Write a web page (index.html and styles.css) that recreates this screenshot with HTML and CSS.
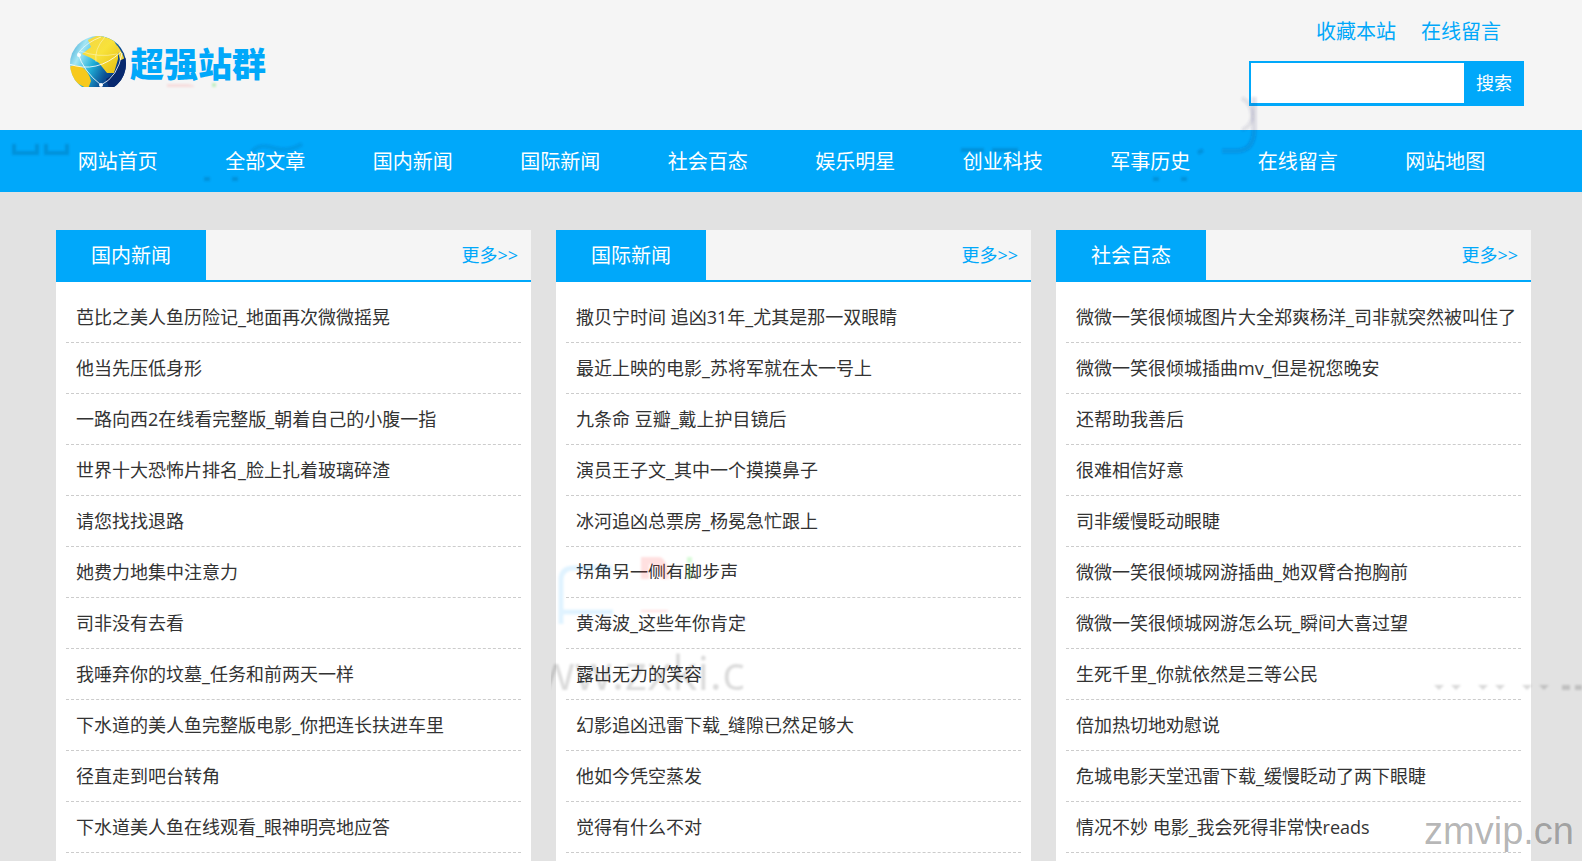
FILE: index.html
```
<!DOCTYPE html>
<html lang="zh-CN">
<head>
<meta charset="utf-8">
<title>超强站群</title>
<link rel="stylesheet" href="styles.css">
</head>
<body>
<header class="header">
  <div class="wrap header-inner">
    <a class="logo" href="#">
      <svg class="globe" viewBox="0 0 58 52" aria-hidden="true">
        <defs>
          <linearGradient id="sea" x1="0" y1="0.2" x2="1" y2="0.7">
            <stop offset="0" stop-color="#3fa6d4"/>
            <stop offset="0.2" stop-color="#a5e6f4"/>
            <stop offset="0.45" stop-color="#1fb0d8"/>
            <stop offset="0.7" stop-color="#0b4f94"/>
            <stop offset="1" stop-color="#06246b"/>
          </linearGradient>
          <linearGradient id="sun" x1="0" y1="0" x2="1" y2="1">
            <stop offset="0" stop-color="#f3d548"/>
            <stop offset="0.5" stop-color="#f8e23a"/>
            <stop offset="1" stop-color="#e6be10"/>
          </linearGradient>
          <clipPath id="ball"><circle cx="29" cy="29" r="28"/></clipPath>
        </defs>
        <g clip-path="url(#ball)">
          <rect width="58" height="58" fill="url(#sea)"/>
          <path d="M13 19L22 12L19 5L29 0L44 4L49 13L49 24L45 38L38 38L30 28L22 23Z" fill="url(#sun)"/>
          <path d="M0 32Q6 29 13 32Q20 37 22 46L19 54L4 46Z" fill="#f7c91c"/>
          <path d="M47 9Q54 17 56 27L51 25Z" fill="#efd43c"/>
          <path d="M37 44Q47 40 50 26L58 22L56 44L42 58Z" fill="#07286e"/>
          <g fill="none" stroke="#fff" stroke-width="1">
            <path d="M0 29Q28 39 52 17" stroke-opacity="0.8"/>
            <path d="M9 18Q14 36 32 50Q49 42 53 18" stroke-opacity="0.8"/>
            <path d="M11 16Q29 23 48 19" stroke-opacity="0.4"/>
            <path d="M36 2Q25 14 27 27" stroke-opacity="0.4"/>
            <path d="M9 18Q18 7 32 2" stroke-opacity="0.6"/>
          </g>
          <circle cx="10" cy="20" r="2" fill="#fff"/>
          <circle cx="32" cy="50" r="2" fill="#fff"/>
        </g>
      </svg>
      <span class="logo-text">超强站群</span>
    </a>
    <div class="tools">
      <div class="quick"><a href="#">收藏本站</a><a href="#">在线留言</a></div>
      <form class="search">
        <input class="search-input" type="text" aria-label="搜索">
        <button class="search-button" type="submit">搜索</button>
      </form>
    </div>
  </div>
</header>
<nav class="nav">
  <div class="wrap nav-inner">
    <a href="#">网站首页</a><a href="#">全部文章</a><a href="#">国内新闻</a><a href="#">国际新闻</a><a href="#">社会百态</a><a href="#">娱乐明星</a><a href="#">创业科技</a><a href="#">军事历史</a><a href="#">在线留言</a><a href="#">网站地图</a>
  </div>
</nav>
<main class="wrap columns">
  <section class="panel">
    <div class="panel-head"><h2>国内新闻</h2><a href="#">更多&gt;&gt;</a></div>
    <ul>
      <li><a href="#">芭比之美人鱼历险记_地面再次微微摇晃</a></li>
      <li><a href="#">他当先压低身形</a></li>
      <li><a href="#">一路向西2在线看完整版_朝着自己的小腹一指</a></li>
      <li><a href="#">世界十大恐怖片排名_脸上扎着玻璃碎渣</a></li>
      <li><a href="#">请您找找退路</a></li>
      <li><a href="#">她费力地集中注意力</a></li>
      <li><a href="#">司非没有去看</a></li>
      <li><a href="#">我唾弃你的坟墓_任务和前两天一样</a></li>
      <li><a href="#">下水道的美人鱼完整版电影_你把连长扶进车里</a></li>
      <li><a href="#">径直走到吧台转角</a></li>
      <li><a href="#">下水道美人鱼在线观看_眼神明亮地应答</a></li>
    </ul>
  </section>
  <section class="panel">
    <div class="panel-head"><h2>国际新闻</h2><a href="#">更多&gt;&gt;</a></div>
    <ul>
      <li><a href="#">撒贝宁时间 追凶31年_尤其是那一双眼睛</a></li>
      <li><a href="#">最近上映的电影_苏将军就在太一号上</a></li>
      <li><a href="#">九条命 豆瓣_戴上护目镜后</a></li>
      <li><a href="#">演员王子文_其中一个摸摸鼻子</a></li>
      <li><a href="#">冰河追凶总票房_杨冕急忙跟上</a></li>
      <li><a href="#">拐角另一侧有脚步声</a></li>
      <li><a href="#">黄海波_这些年你肯定</a></li>
      <li><a href="#">露出无力的笑容</a></li>
      <li><a href="#">幻影追凶迅雷下载_缝隙已然足够大</a></li>
      <li><a href="#">他如今凭空蒸发</a></li>
      <li><a href="#">觉得有什么不对</a></li>
    </ul>
  </section>
  <section class="panel">
    <div class="panel-head"><h2>社会百态</h2><a href="#">更多&gt;&gt;</a></div>
    <ul>
      <li><a href="#">微微一笑很倾城图片大全郑爽杨洋_司非就突然被叫住了</a></li>
      <li><a href="#">微微一笑很倾城插曲mv_但是祝您晚安</a></li>
      <li><a href="#">还帮助我善后</a></li>
      <li><a href="#">很难相信好意</a></li>
      <li><a href="#">司非缓慢眨动眼睫</a></li>
      <li><a href="#">微微一笑很倾城网游插曲_她双臂合抱胸前</a></li>
      <li><a href="#">微微一笑很倾城网游怎么玩_瞬间大喜过望</a></li>
      <li><a href="#">生死千里_你就依然是三等公民</a></li>
      <li><a href="#">倍加热切地劝慰说</a></li>
      <li><a href="#">危城电影天堂迅雷下载_缓慢眨动了两下眼睫</a></li>
      <li><a href="#">情况不妙 电影_我会死得非常快reads</a></li>
    </ul>
  </section>
</main>
<svg class="marks" aria-hidden="true">
  <defs>
    <clipPath id="url-clip"><rect x="551" y="640" width="194" height="60"/></clipPath>
    <filter id="soft"><feGaussianBlur stdDeviation="1"/></filter>
  </defs>
  <!-- leftover strip covering the lower edge of one row's text -->
  <rect x="561" y="579" width="180" height="9" fill="#fff"/>
  <g filter="url(#soft)">
    <!-- header -->
    <path d="M167 84H187Q192 84 195 87H167Z" fill="#f00" fill-opacity="0.1"/>
    <path d="M212 83H216V87H212Z" fill="#0d0" fill-opacity="0.2"/>
    <path d="M1242 98Q1252 104 1252 116Q1252 126 1242 130" fill="none" stroke="#447" stroke-opacity="0.12" stroke-width="4"/>
    <path d="M1254 97V130Q1254 151 1236 151H1222" fill="none" stroke="#226" stroke-opacity="0.14" stroke-width="5"/>
    <!-- navigation bar -->
    <g fill="none" stroke="#036" stroke-opacity="0.2" stroke-width="4">
      <path d="M14 144V153H37V144M46 144V153H67V144"/>
      <path d="M252 152Q258 144 270 147Q288 153 302 144" stroke-opacity="0.12"/>
      <path d="M204 179H210M232 179H238M1153 179H1159M1181 179H1187M1198 153L1203 150"/>
      <path d="M961 150H984M992 150H1018"/>
    </g>
    <!-- middle column -->
    <g fill="none" stroke="#09f" stroke-opacity="0.12" stroke-width="5">
      <path d="M561 624V580Q561 568 574 568H612M563 612H613"/>
    </g>
    <path d="M641 557H660Q668 560 669 579H661Q660 566 649 564V579H641Z" fill="#f00" fill-opacity="0.12"/>
    <path d="M641 610H668V612H641Z" fill="#f00" fill-opacity="0.12"/>
    <path d="M687 557H692V563H687ZM687 566H692V579H687Z" fill="#0d0" fill-opacity="0.15"/>
    <path d="M737 619Q742 621 745 618" fill="none" stroke="#44a" stroke-opacity="0.15" stroke-width="4"/>
    <!-- right column -->
    <path d="M1434 685L1439 690L1444 685ZM1451 685L1456 690L1461 685ZM1478 685L1483 690L1488 685ZM1495 685L1500 690L1505 685ZM1522 685L1527 690L1532 685ZM1539 685L1544 690L1549 685ZM1562 685H1570V690H1562ZM1575 685H1582V690H1575Z" fill="#000" fill-opacity="0.15"/>
  </g>
  <g clip-path="url(#url-clip)">
    <text class="url-mark" x="745" y="690" text-anchor="end" filter="url(#soft)">www.zxki.c</text>
  </g>
</svg>
<div class="site-mark">zmvip.cn</div>
</body>
</html>
```

FILE: styles.css
```
* { box-sizing: border-box; }
body {
  margin: 0;
  min-height: 100vh;
  display: flex;
  flex-direction: column;
  position: relative;
  overflow: hidden;
  background: #e2e2e2;
  color: #333;
  font-family: "Open Sans", "Noto Sans CJK SC", sans-serif;
  font-size: 18px;
  font-weight: 400;
}
a { color: inherit; text-decoration: none; }
.wrap { width: 100%; max-width: 1500px; margin: 0 auto; }
.header { background: #f5f5f5; }
.header-inner { height: 130px; display: flex; justify-content: space-between; padding: 0 17px 0 28px; }
.logo { display: flex; align-items: flex-start; gap: 3px; padding-top: 35px; color: #00a8fa; }
.globe { width: 58px; height: 52px; }
.logo-text { font: 900 34px/56px "Noto Sans CJK SC", sans-serif; }
.tools { display: flex; flex-direction: column; align-items: flex-end; gap: 9px; padding-top: 12px; }
.quick { display: flex; gap: 25px; padding-right: 23px; color: #00a8fa; font-size: 20px; line-height: 40px; }
.search { display: flex; width: 275px; height: 45px; }
.search-input { flex: 1; min-width: 0; padding: 0 8px; border: 2px solid #00a8fa; border-bottom-width: 3px; border-right: 0; background: #fff; font: inherit; outline: 0; }
.search-button { width: 60px; padding: 0 0 4px; border: 0; background: #00a8fa; color: #fff; font: inherit; }
.nav { background: #00a8fa; color: #fff; }
.nav-inner { display: grid; grid-template-columns: repeat(10, 1fr); padding: 2px 22px 0 3px; font-size: 20px; line-height: 60px; text-align: center; }
.columns { flex: 1; display: grid; grid-template-columns: repeat(3, minmax(0, 1fr)); gap: 25px; padding: 38px 10px 0 15px; }
.panel { background: #fff; }
.panel-head { display: flex; justify-content: space-between; background: #f5f5f5; border-bottom: 2px solid #00a8fa; color: #00a8fa; line-height: 50px; padding-right: 13px; }
.panel-head h2 { margin: 0 0 -2px; width: 150px; background: #00a8fa; color: #fff; font-size: 20px; font-weight: 400; line-height: 52px; text-align: center; }
.panel ul { list-style: none; margin: 0; padding: 10px 10px 0; }
.panel li { padding: 0 10px; line-height: 50px; border-bottom: 1px dashed #ccc; white-space: nowrap; }
.marks { position: absolute; inset: 0; width: 100%; height: 100%; pointer-events: none; }
.url-mark { font: 48px "Open Sans", sans-serif; fill: #000; fill-opacity: 0.14; }
.site-mark { position: absolute; right: 8px; bottom: 8px; color: rgba(0, 0, 0, 0.3); font: 38px/44px "Liberation Sans", sans-serif; }
```
